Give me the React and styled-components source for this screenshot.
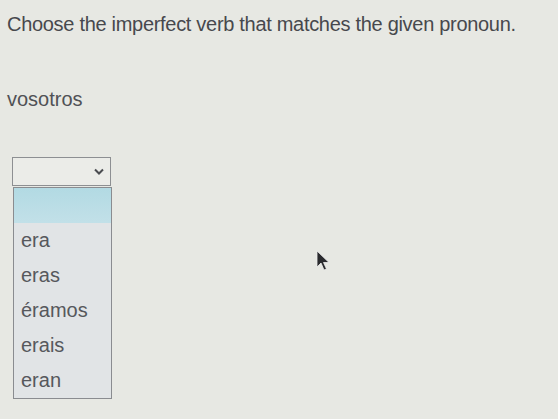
import React, { useState } from 'react';
import styled, { createGlobalStyle } from 'styled-components';

const GlobalStyle = createGlobalStyle`
  html, body {
    margin: 0;
    padding: 0;
    background: #e7e8e3;
  }
  body {
    font-family: "Liberation Sans", Arial, sans-serif;
    color: #4b4c50;
  }
`;

const Page = styled.div`
  position: relative;
  width: 558px;
  height: 419px;
  padding: 12px 0 0 7px;
  box-sizing: border-box;
  overflow: hidden;
`;

const Prompt = styled.div`
  font-size: 20px;
  line-height: 24px;
  letter-spacing: -0.3px;
  color: #47484d;
`;

const Pronoun = styled.div`
  margin-top: 51px;
  font-size: 20px;
  line-height: 24px;
  color: #505155;
`;

const SelectWrap = styled.div`
  margin-top: 46px;
  margin-left: 5px;
  width: 99px;
`;

const SelectBox = styled.div`
  height: 29px;
  box-sizing: border-box;
  border: 1px solid #8d8f92;
  background: #ebece8;
  display: flex;
  align-items: center;
  justify-content: flex-end;
  padding-right: 6px;
`;

const Menu = styled.ul`
  list-style: none;
  margin: 1px 0 0 1px;
  padding: 0;
  width: 99px;
  box-sizing: border-box;
  border: 1px solid #8a8c90;
  background: #e1e4e6;
`;

const Option = styled.li`
  height: 35px;
  display: flex;
  align-items: center;
  padding-left: 7px;
  font-size: 20px;
  color: #56585c;
  background: ${(p) => (p.active ? 'linear-gradient(#b2dae3, #c2e0e8)' : 'transparent')};
`;

const Cursor = styled.svg`
  position: absolute;
  left: 316px;
  top: 250px;
`;

const options = ['', 'era', 'eras', 'éramos', 'erais', 'eran'];

export default function App() {
  const [active] = useState(0);
  return (
    <>
      <GlobalStyle />
      <Page>
        <Prompt>Choose the imperfect verb that matches the given pronoun.</Prompt>
        <Pronoun>vosotros</Pronoun>
        <SelectWrap>
          <SelectBox>
            <svg width="10" height="7" viewBox="0 0 10 7">
              <path d="M1 1.5 L5 5.5 L9 1.5" fill="none" stroke="#4a4c50" strokeWidth="2" />
            </svg>
          </SelectBox>
          <Menu>
            {options.map((o, i) => (
              <Option key={i} active={i === active}>{o}</Option>
            ))}
          </Menu>
        </SelectWrap>
        <Cursor width="16" height="24" viewBox="0 0 16 24">
          <path d="M1 1 L1 17 L5 13 L8 20 L10.5 19 L7.5 12.5 L13 12.5 Z" fill="#2a2b2e" stroke="#eeeeee" strokeWidth="0.8" />
        </Cursor>
      </Page>
    </>
  );
}
